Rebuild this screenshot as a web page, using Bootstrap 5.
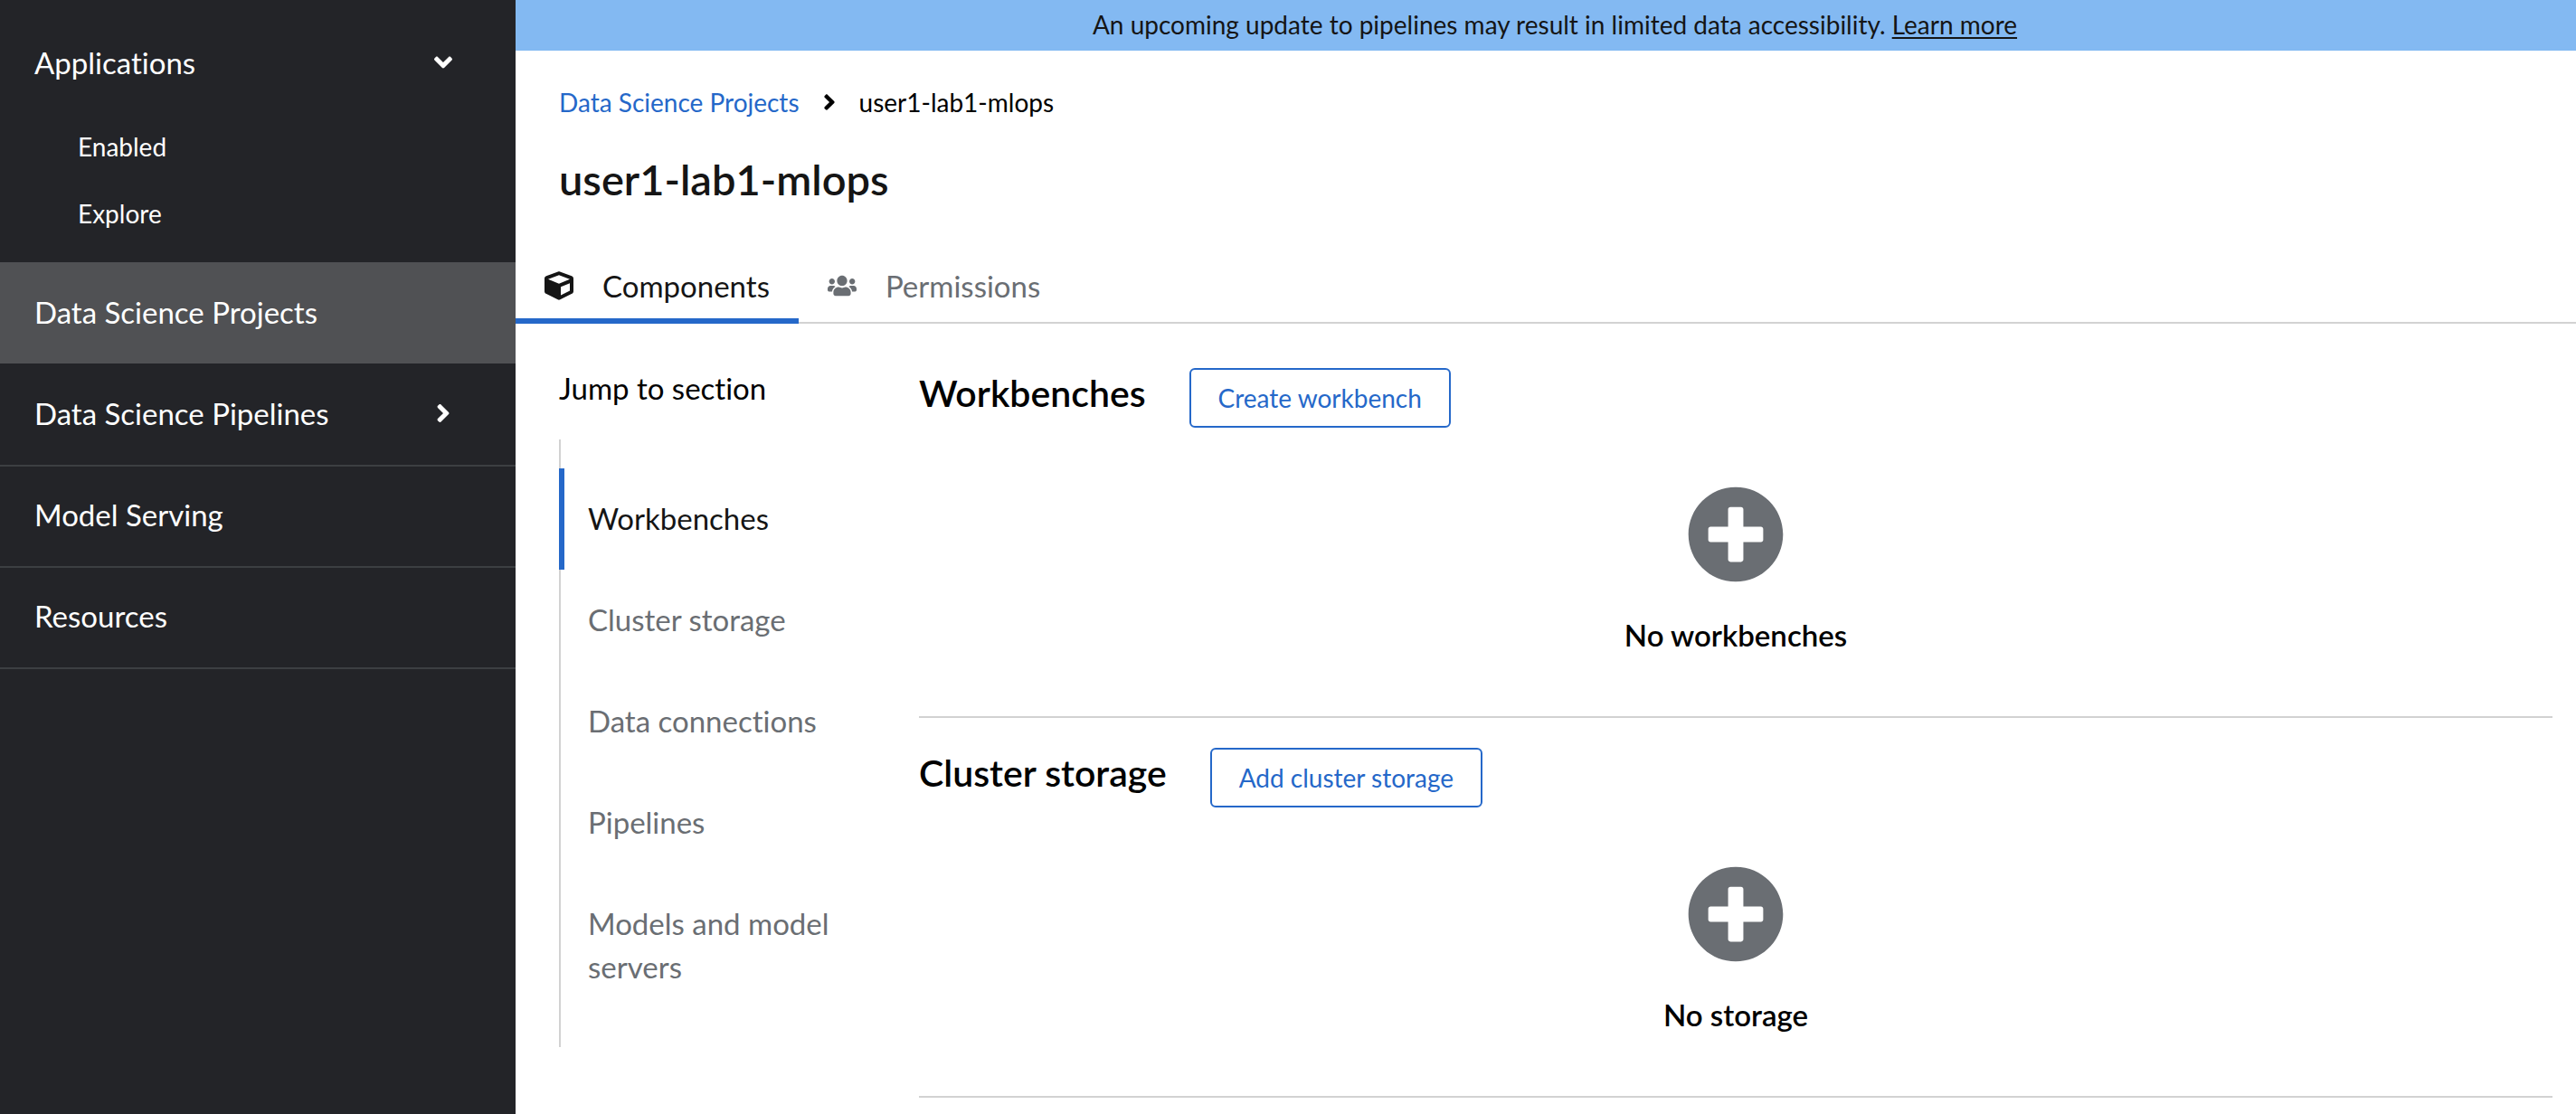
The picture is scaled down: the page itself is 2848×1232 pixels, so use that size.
<!DOCTYPE html>
<html lang="en">
<head>
<meta charset="utf-8">
<meta name="viewport" content="width=device-width, initial-scale=1">
<title>user1-lab1-mlops</title>
<link href="https://cdn.jsdelivr.net/npm/bootstrap@5.3.0/dist/css/bootstrap.min.css" rel="stylesheet">
<style>
  :root {
    --rh-blue: #2568c9;
    --rh-text: #151515;
    --rh-muted: #6a6e73;
    --rh-line: #d2d2d2;
    --rh-side: #232428;
    --rh-side-line: #3c3f42;
  }
  body { font-family: Lato, "Liberation Sans", sans-serif; font-size: 33px; line-height: 48px; color: #000; background: #fff; }
  body, button { font-variant-ligatures: none; }
  a { text-decoration: none; }
  .text-sm28 { font-size: 28px; line-height: 42px; }

  /* Sidebar */
  .side { width: 570px; background: var(--rh-side); padding-top: 14px; }
  .side a, .side button { color: #fff; }
  .side-item { padding: 29px 70px 33px 38px; border: 0 solid var(--rh-side-line); border-top-width: 2px; background: none; width: 100%; text-align: left; border-radius: 0; line-height: 48px; }
  .side-toggle, .current + .side-item { border-top-color: transparent; }
  .side-item.current { background: #505154; border-top-color: #505154; }
  .side-item:last-child { border-bottom-width: 2px; }
  .side-sub { padding-bottom: 16px; }
  .side-sub a { padding: 15px 32px 17px 86px; }
  .chev { width: 20px; height: 32px; fill: currentColor; }

  /* Page head */
  .notice { background: #83b9f2; color: var(--rh-text); padding: 6px 24px 8px 44px; }
  .notice a { color: inherit; text-decoration: underline; text-decoration-thickness: 2px; text-underline-offset: 3px; }
  .page-head { padding: 36px 48px 48px; }
  .crumb { --bs-breadcrumb-margin-bottom: 34px; gap: 26px; }
  .crumb a { color: var(--rh-blue); }
  .crumb svg { width: 14px; height: 28px; }
  .page-title { font-size: 47px; line-height: 60px; font-weight: 600; color: var(--rh-text); }

  /* Tabs */
  .tabs { border-bottom: 2px solid var(--rh-line); }
  .tabs .tab-btn { padding: 16px 32px 12px; margin-bottom: -2px; gap: 32px; border: 0; border-bottom: 6px solid transparent; background: none; color: var(--rh-muted); }
  .tabs .tab-btn.active { color: var(--rh-text); border-bottom-color: var(--rh-blue); }
  .tab-btn svg { width: 32px; height: 32px; fill: currentColor; }

  /* Jump links */
  .content-row { padding: 47px 26px 0 48px; gap: 48px; }
  .jump { width: 350px; }
  .jump-list { margin-top: 33px; padding: 32px 0; box-shadow: inset 2px 0 var(--rh-line); }
  .jump-list a { padding: 31px 32px 33px; color: var(--rh-muted); }
  .jump-list a.active { color: var(--rh-text); box-shadow: inset 6px 0 var(--rh-blue); }

  /* Sections */
  .sections { padding-top: 2px; }
  .block { border-bottom: 2px solid var(--rh-line); padding-bottom: 66px; margin-bottom: 33px; }
  .block-head { gap: 48px; }
  .block-title { font-size: 41px; line-height: 56px; font-weight: 600; }
  .btn-line { --bs-btn-color: var(--rh-blue); --bs-btn-border-color: var(--rh-blue); --bs-btn-hover-bg: var(--rh-blue); --bs-btn-hover-color: #fff; --bs-btn-font-size: 28px; --bs-btn-line-height: 38px; --bs-btn-border-width: 2px; --bs-btn-border-radius: 6px; padding: 12px 30px; line-height: 38px; }
  .empty { padding-top: 64px; }
  .empty svg { width: 108px; height: 108px; fill: var(--rh-muted); margin-bottom: 33px; }
  .empty h3 { font-size: 33px; line-height: 48px; font-weight: 600; }
</style>
<script src="https://cdn.jsdelivr.net/npm/bootstrap@5.3.0/dist/js/bootstrap.bundle.min.js"></script>
</head>
<body>
<svg class="d-none" aria-hidden="true">
  <symbol id="i-down" viewBox="0 0 320 512"><path d="M143 352.300L7 216.300c-9.400-9.400-9.400-24.600 0-33.900l22.600-22.600c9.400-9.400 24.600-9.400 33.900 0l96.400 96.400 96.400-96.400c9.400-9.400 24.600-9.400 33.900 0l22.600 22.600c9.400 9.400 9.400 24.600 0 33.900l-136 136c-9.200 9.400-24.400 9.400-33.800 0z"/></symbol>
  <symbol id="i-right" viewBox="0 0 256 512"><path d="M224.300 273l-136 136c-9.400 9.400-24.600 9.400-33.900 0l-22.600-22.600c-9.400-9.400-9.400-24.600 0-33.900l96.400-96.400-96.400-96.400c-9.400-9.400-9.400-24.600 0-33.900L54.300 103c9.400-9.400 24.600-9.400 33.900 0l136 136c9.500 9.400 9.500 24.600.1 34z"/></symbol>
  <symbol id="i-plus" viewBox="0 0 512 512"><path d="M256 8C119 8 8 119 8 256s111 248 248 248 248-111 248-248S393 8 256 8zm144 276c0 6.600-5.400 12-12 12h-92v92c0 6.600-5.400 12-12 12h-56c-6.600 0-12-5.400-12-12v-92h-92c-6.600 0-12-5.400-12-12v-56c0-6.600 5.400-12 12-12h92v-92c0-6.600 5.400-12 12-12h56c6.600 0 12 5.400 12 12v92h92c6.600 0 12 5.400 12 12v56z"/></symbol>
  <symbol id="i-cube" viewBox="0 0 512 512"><path d="M239.100 6.300l-208 78c-18.700 7-31.100 25-31.100 45v225.100c0 18.200 10.300 34.800 26.500 42.900l208 104c13.500 6.800 29.400 6.800 42.900 0l208-104c16.300-8.100 26.500-24.800 26.500-42.900V129.300c0-20-12.400-37.900-31.100-44.900l-208-78C262 2.200 250 2.200 239.100 6.300zM256 68.400l192 72v1.100l-192 78-192-78v-1.100l192-72zm32 356V275.500l160-65v133.900l-160 80z"/></symbol>
  <symbol id="i-users" viewBox="0 0 640 512"><path d="M96 224c35.300 0 64-28.700 64-64s-28.700-64-64-64-64 28.700-64 64 28.700 64 64 64zm448 0c35.300 0 64-28.700 64-64s-28.700-64-64-64-64 28.700-64 64 28.700 64 64 64zm32 32h-64c-17.600 0-33.500 7.100-45.100 18.600 40.300 22.100 68.900 62 75.100 109.400h66c17.700 0 32-14.300 32-32v-32c0-35.300-28.700-64-64-64zm-256 0c61.900 0 112-50.100 112-112S381.900 32 320 32 208 82.100 208 144s50.100 112 112 112zm76.800 32h-8.300c-20.800 10-43.900 16-68.500 16s-47.600-6-68.500-16h-8.300C179.600 288 128 339.600 128 403.200V432c0 26.500 21.500 48 48 48h288c26.500 0 48-21.500 48-48v-28.800c0-63.600-51.600-115.200-115.200-115.200zm-223.700-13.400C161.500 263.100 145.600 256 128 256H64c-35.300 0-64 28.700-64 64v32c0 17.700 14.300 32 32 32h65.900c6.300-47.400 34.900-87.300 75.200-109.400z"/></symbol>
</svg>

<div class="d-flex min-vh-100">
  <nav class="side flex-shrink-0" aria-label="Main">
    <button type="button" class="side-item side-toggle d-flex justify-content-between align-items-center" data-bs-toggle="collapse" data-bs-target="#apps" aria-expanded="true" aria-controls="apps">Applications <svg class="chev" aria-hidden="true"><use href="#i-down"/></svg></button>
    <div id="apps" class="side-sub collapse show text-sm28">
      <a class="d-block" href="#">Enabled</a>
      <a class="d-block" href="#">Explore</a>
    </div>
    <a class="side-item current d-block" href="#" aria-current="page">Data Science Projects</a>
    <button type="button" class="side-item d-flex justify-content-between align-items-center" aria-expanded="false">Data Science Pipelines <svg class="chev" aria-hidden="true"><use href="#i-right"/></svg></button>
    <a class="side-item d-block" href="#">Model Serving</a>
    <a class="side-item d-block" href="#">Resources</a>
  </nav>

  <div class="flex-grow-1">
    <div class="notice text-center text-sm28">An upcoming update to pipelines may result in limited data accessibility. <a href="#">Learn more</a></div>
    <main>
      <header class="page-head">
        <nav aria-label="Breadcrumb">
          <ol class="crumb breadcrumb align-items-center text-sm28">
            <li><a href="#">Data Science Projects</a></li>
            <li class="d-flex" aria-hidden="true"><svg><use href="#i-right"/></svg></li>
            <li aria-current="page">user1-lab1-mlops</li>
          </ol>
        </nav>
        <h1 class="page-title mb-0">user1-lab1-mlops</h1>
      </header>

      <div class="tabs d-flex" role="tablist">
        <button type="button" class="tab-btn active d-flex align-items-center" role="tab" aria-selected="true"><svg aria-hidden="true"><use href="#i-cube"/></svg>Components</button>
        <button type="button" class="tab-btn d-flex align-items-center" role="tab" aria-selected="false"><svg aria-hidden="true"><use href="#i-users"/></svg>Permissions</button>
      </div>

      <div class="content-row d-flex">
        <nav class="jump flex-shrink-0" aria-labelledby="jump-label">
          <div id="jump-label">Jump to section</div>
          <div class="jump-list">
            <a class="d-block active" href="#workbenches">Workbenches</a>
            <a class="d-block" href="#cluster-storage">Cluster storage</a>
            <a class="d-block" href="#">Data connections</a>
            <a class="d-block" href="#">Pipelines</a>
            <a class="d-block" href="#">Models and model servers</a>
          </div>
        </nav>

        <div class="sections flex-grow-1">
          <section class="block" id="workbenches">
            <div class="block-head d-flex align-items-start">
              <h2 class="block-title mb-0">Workbenches</h2>
              <button type="button" class="btn btn-line">Create workbench</button>
            </div>
            <div class="empty d-flex flex-column align-items-center">
              <svg aria-hidden="true"><use href="#i-plus"/></svg>
              <h3 class="mb-0">No workbenches</h3>
            </div>
          </section>
          <section class="block mb-0" id="cluster-storage">
            <div class="block-head d-flex align-items-start">
              <h2 class="block-title mb-0">Cluster storage</h2>
              <button type="button" class="btn btn-line">Add cluster storage</button>
            </div>
            <div class="empty d-flex flex-column align-items-center">
              <svg aria-hidden="true"><use href="#i-plus"/></svg>
              <h3 class="mb-0">No storage</h3>
            </div>
          </section>
        </div>
      </div>
    </main>
  </div>
</div>
</body>
</html>
